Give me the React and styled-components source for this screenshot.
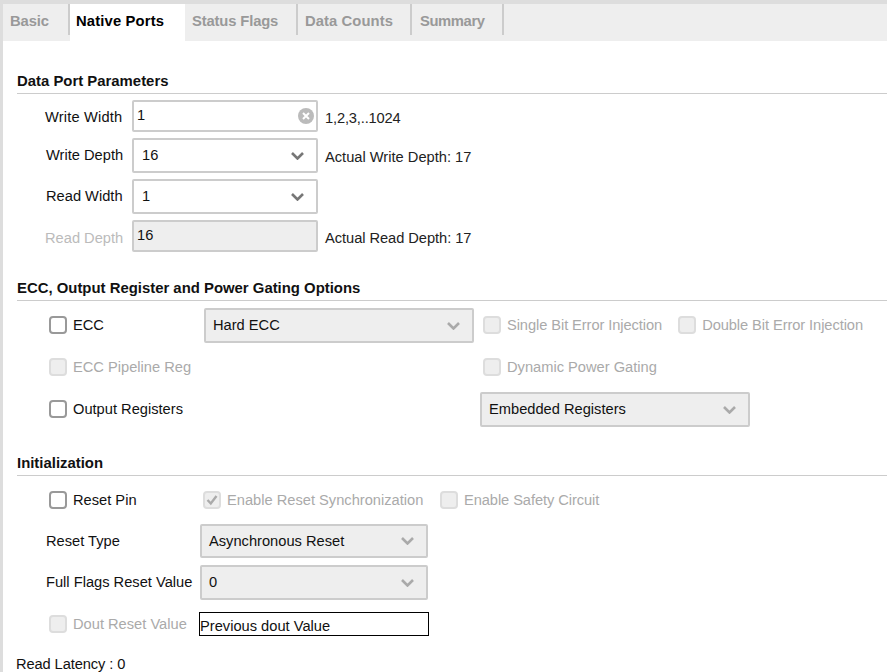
import React from "react";
import styled, { createGlobalStyle } from "styled-components";

const GlobalStyle = createGlobalStyle`
  html, body {
    margin: 0;
    padding: 0;
    background: #fff;
  }
  body {
    font-family: "Liberation Sans", Arial, sans-serif;
    font-size: 14.67px;
    color: #111;
  }
`;

const Frame = styled.div`
  width: 887px;
  height: 672px;
  box-sizing: border-box;
  border-left: 3px solid #ddd;
  border-top: 4px solid #ddd;
  overflow: hidden;
  background: #fff;
`;

const TabBar = styled.div`
  display: flex;
  height: 37px;
  background: #eee;
`;

const Tab = styled.div`
  width: ${(p) => p.$width}px;
  box-sizing: border-box;
  display: flex;
  justify-content: space-between;
  align-items: flex-start;
  padding-left: ${(p) => p.$pad}px;
  line-height: 34px;
  font-size: 14.8px;
  font-weight: bold;
  letter-spacing: ${(p) => p.$spacing || 0}px;
  color: ${(p) => (p.$active ? "#000" : "#999")};
  background: ${(p) => (p.$active ? "#fff" : "transparent")};
`;

const TabDivider = styled.span`
  width: 2px;
  height: 31px;
  background: #ccc;
`;

const Heading = styled.div`
  height: 25px;
  line-height: 27px;
  margin-top: ${(p) => p.$top}px;
  margin-left: 14px;
  font-size: 14.9px;
  font-weight: bold;
  border-bottom: 1px solid #ccc;
`;

const PortGrid = styled.div`
  display: grid;
  grid-template-columns: 87px 186px auto;
  row-gap: 6px;
  margin-top: 6px;
  padding-left: 42px;
  align-items: center;
`;

const EccGrid = styled.div`
  display: grid;
  grid-template-columns: 155px 276px auto;
  grid-auto-rows: 35px;
  row-gap: 7px;
  margin-top: 7px;
  padding-left: 46px;
  align-items: center;
`;

const InitGrid = styled.div`
  display: grid;
  grid-template-columns: 154px 240px auto;
  grid-template-rows: 34px 34px 35px 34px;
  row-gap: 7px;
  margin-top: 7px;
  padding-left: 43px;
  align-items: center;
`;

const Label = styled.span`
  position: relative;
  top: ${(p) => p.$shift || 0}px;
  white-space: nowrap;
  padding-left: ${(p) => p.$indent || 0}px;
  letter-spacing: ${(p) => p.$spacing || 0}px;
  color: ${(p) => (p.$muted ? "#bbb" : "#111")};
`;

const Note = styled.span`
  white-space: nowrap;
  padding: 3px 0 0 7px;
  letter-spacing: ${(p) => p.$spacing || 0}px;
  color: #222;
`;

const Field = styled.div`
  box-sizing: border-box;
  display: flex;
  align-items: center;
  justify-content: space-between;
  width: ${(p) => p.$width}px;
  height: ${(p) => p.$height || 35}px;
  padding: 0 12px 0 ${(p) => p.$pad || 7}px;
  background: ${(p) => (p.$disabled ? "#eee" : "#fff")};
  border: 2px solid #ccc;
  border-radius: 2px;
  color: #111;
`;

const FieldText = styled.span`
  position: relative;
  top: ${(p) => p.$shift || 0}px;
`;

const Option = styled.label`
  position: relative;
  top: ${(p) => p.$shift || 0}px;
  display: flex;
  align-items: center;
  gap: 6px;
  white-space: nowrap;
  padding-left: ${(p) => p.$indent || 0}px;
  letter-spacing: ${(p) => p.$spacing || 0}px;
  color: ${(p) => (p.$disabled ? "#aaa" : "#111")};
`;

const OptionRow = styled.div`
  display: flex;
  gap: 16px;
`;

const Box = styled.span`
  box-sizing: border-box;
  width: 18px;
  height: 18px;
  flex: none;
  display: flex;
  align-items: center;
  justify-content: center;
  border-radius: 4px;
  border: 2px solid ${(p) => (p.$disabled ? "#ddd" : "#999")};
  background: ${(p) => (p.$disabled ? "#eee" : "#fff")};
`;

const ValueBox = styled.div`
  box-sizing: border-box;
  width: 230px;
  height: 24px;
  margin-left: -1px;
  padding: 4px 0 0 0;
  line-height: 18px;
  border: 1px solid #000;
  background: #fff;
  color: #111;
`;

const Footer = styled.div`
  margin: 15px 0 0 13px;
  line-height: 16px;
  letter-spacing: -0.1px;
  color: #111;
`;

const ClearSvg = styled.svg`
  margin-right: -10px;
`;

const Chevron = ({ disabled }) => (
  <svg width="13" height="8" viewBox="0 0 13 8" fill="none">
    <path
      d="M1 1 L6.5 6.5 L12 1"
      stroke={disabled ? "#aaa" : "#777"}
      strokeWidth="2.6"
    />
  </svg>
);

const ClearIcon = () => (
  <ClearSvg width="16" height="16" viewBox="0 0 16 16">
    <circle cx="8" cy="8" r="8" fill="#bbb" />
    <path d="M5 5 L11 11 M11 5 L5 11" stroke="#fff" strokeWidth="2" />
  </ClearSvg>
);

const Select = ({ width, value, disabled, pad, height, shift }) => (
  <Field $width={width} $disabled={disabled} $pad={pad} $height={height}>
    <FieldText $shift={shift}>{value}</FieldText>
    <Chevron disabled={disabled} />
  </Field>
);

const Check = ({ label, disabled, checked, indent, shift, spacing }) => (
  <Option $disabled={disabled} $indent={indent} $shift={shift} $spacing={spacing}>
    <Box $disabled={disabled}>
      {checked && (
        <svg width="14" height="14" viewBox="0 0 14 14" fill="none">
          <path d="M2.5 7 L5.8 10.5 L11.5 3" stroke="#aaa" strokeWidth="2.4" />
        </svg>
      )}
    </Box>
    {label}
  </Option>
);

const tabs = [
  { name: "Basic", width: 67, pad: 7, spacing: -0.1 },
  { name: "Native Ports", width: 115, pad: 6, active: true, spacing: 0.15 },
  { name: "Status Flags", width: 113, pad: 7, spacing: -0.15 },
  { name: "Data Counts", width: 114, pad: 7, spacing: 0.08 },
  { name: "Summary", width: 92, pad: 8, spacing: -0.4 },
];

export default function App() {
  return (
    <>
      <GlobalStyle />
      <Frame>
        <TabBar>
          {tabs.map((t) => (
            <Tab key={t.name} $width={t.width} $pad={t.pad} $active={t.active} $spacing={t.spacing}>
              {t.name}
              {!t.active && <TabDivider />}
            </Tab>
          ))}
        </TabBar>

        <Heading $top={27}>Data Port Parameters</Heading>
        <PortGrid>
          <Label $shift={1} $spacing={0.18}>Write Width</Label>
          <Field $width={186} $height={32} $pad={3}>
            <FieldText $shift={-1}>1</FieldText>
            <ClearIcon />
          </Field>
          <Note $spacing={-0.15}>1,2,3,..1024</Note>

          <Label $indent={1} $shift={-1}>Write Depth</Label>
          <Select width={186} value="16" shift={-1} pad={8} />
          <Note>Actual Write Depth: 17</Note>

          <Label $indent={1} $shift={-1}>Read Width</Label>
          <Select width={186} value="1" shift={-1} pad={8} />
          <span />

          <Label $muted $shift={2}>Read Depth</Label>
          <Field $width={186} $height={32} $pad={3} $disabled>
            <FieldText $shift={-1}>16</FieldText>
          </Field>
          <Note $spacing={-0.05}>Actual Read Depth: 17</Note>
        </PortGrid>

        <Heading $top={23}>ECC, Output Register and Power Gating Options</Heading>
        <EccGrid>
          <Check label="ECC" shift={-1} />
          <Select width={270} value="Hard ECC" disabled shift={-1} />
          <OptionRow>
            <Check label="Single Bit Error Injection" disabled indent={3} shift={-1} spacing={-0.08} />
            <Check label="Double Bit Error Injection" disabled shift={-1} spacing={-0.08} />
          </OptionRow>

          <Check label="ECC Pipeline Reg" disabled shift={-1} />
          <span />
          <Check label="Dynamic Power Gating" disabled indent={3} shift={-1} />

          <Check label="Output Registers" shift={-1} />
          <span />
          <Select width={270} value="Embedded Registers" disabled shift={-1} />
        </EccGrid>

        <Heading $top={23}>Initialization</Heading>
        <InitGrid>
          <Check label="Reset Pin" indent={3} />
          <Check label="Enable Reset Synchronization" disabled checked indent={3} />
          <Check label="Enable Safety Circuit" disabled spacing={-0.08} />

          <Label>Reset Type</Label>
          <Select width={228} height={34} value="Asynchronous Reset" disabled />
          <span />

          <Label $shift={-1}>Full Flags Reset Value</Label>
          <Select width={228} value="0" disabled shift={-1} />
          <span />

          <Check label="Dout Reset Value" disabled indent={3} />
          <ValueBox>Previous dout Value</ValueBox>
        </InitGrid>

        <Footer>Read Latency : 0</Footer>
      </Frame>
    </>
  );
}
